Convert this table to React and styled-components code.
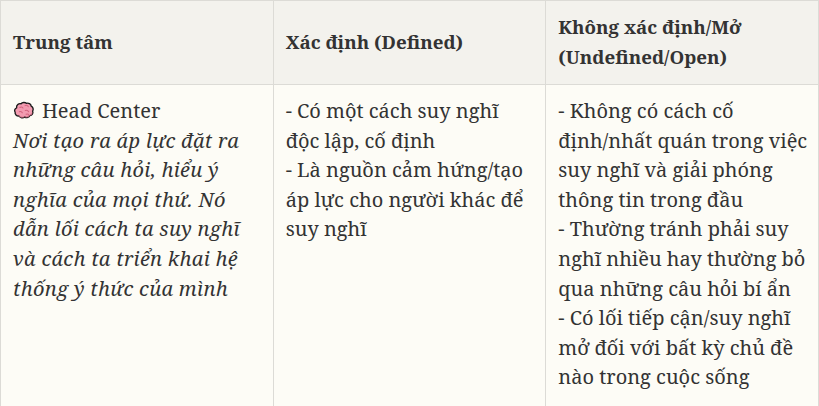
import React from "react";
import styled, { createGlobalStyle } from "styled-components";

const GlobalStyle = createGlobalStyle`
  html, body {
    margin: 0;
    padding: 0;
    background: #fdfcf6;
  }
  body {
    font-family: "Noto Serif", "DejaVu Serif", serif;
    color: #333;
  }
`;

const Table = styled.table`
  width: 819px;
  border-collapse: collapse;
  table-layout: fixed;
  font-size: 20px;
  line-height: 29.6px;
  color: #333;
`;

const HeadCell = styled.th`
  background: #f3f2ed;
  border: 1px solid #dcdbd6;
  padding: 11px 12px 12px;
  text-align: left;
  font-size: 18.75px;
  line-height: 30px;
  font-weight: 700;
  vertical-align: middle;
`;

const Cell = styled.td`
  background: #fdfcf6;
  border: 1px solid #dcdbd6;
  padding: 11px ${(props) => (props.tight ? "6px" : "12px")} 15px 12px;
  vertical-align: top;
`;

const Line = styled.div`
  font-style: ${(props) => (props.italic ? "italic" : "normal")};
  letter-spacing: ${(props) => (props.italic ? "0.3px" : "normal")};
`;

const Emoji = styled.svg`
  width: 22px;
  height: 19px;
  vertical-align: -2px;
  margin-right: 7px;
`;

function Brain() {
  return (
    <Emoji viewBox="0 0 20 18">
      <path
        d="M3 6.5C2.5 3.8 5 2 7.2 2.6C8.3 1.2 11 1 12.3 2.2C14.3 1.6 16.6 2.8 16.8 4.8C18.6 5.6 19.2 8 18.2 9.6C19 11.6 17.6 13.8 15.6 13.8C14.8 15.6 12.4 16.2 10.8 15.2C9 16.4 6.2 16 5.2 14.2C3 14.4 1.2 12.6 1.6 10.6C0.6 9.2 1.2 7.2 3 6.5Z"
        fill="#f29bb0"
        stroke="#1b1b1b"
        strokeWidth="1.3"
        strokeLinejoin="round"
      />
      <path
        d="M6 6.2C7 5.4 8.4 5.6 9 6.6M11 4.4C12 3.8 13.6 4.2 14 5.4M5.6 10.2C6.8 9.6 8 10.2 8.4 11.2M11.2 9C12.4 8.4 14 9 14.4 10.2M12 12.6C13 12.2 14.2 12.6 14.6 13.4"
        fill="none"
        stroke="#d2637e"
        strokeWidth="1"
        strokeLinecap="round"
      />
      <path
        d="M4 12.5C6 14.8 10 15.2 12 14.6C14.5 14 16.5 12.8 17.8 10.6C18.4 12.4 17.2 13.8 15.6 13.8C14.8 15.6 12.4 16.2 10.8 15.2C9 16.4 6.2 16 5.2 14.2Z"
        fill="#e0738e"
        opacity="0.7"
      />
    </Emoji>
  );
}

export default function App() {
  return (
    <>
      <GlobalStyle />
      <Table>
        <thead>
          <tr>
            <HeadCell>Trung tâm</HeadCell>
            <HeadCell>Xác định (Defined)</HeadCell>
            <HeadCell>Không xác định/Mở (Undefined/Open)</HeadCell>
          </tr>
        </thead>
        <tbody>
          <tr>
            <Cell>
              <Line>
                <Brain />
                Head Center
              </Line>
              <Line italic>
                Nơi tạo ra áp lực đặt ra những câu hỏi, hiểu ý nghĩa của mọi
                thứ. Nó dẫn lối cách ta suy nghĩ và cách ta triển khai hệ thống
                ý thức của mình
              </Line>
            </Cell>
            <Cell>
              <Line>- Có một cách suy nghĩ độc lập, cố định</Line>
              <Line>
                - Là nguồn cảm hứng/tạo áp lực cho người khác để suy nghĩ
              </Line>
            </Cell>
            <Cell tight>
              <Line>
                - Không có cách cố định/nhất quán trong việc suy nghĩ và giải
                phóng thông tin trong đầu
              </Line>
              <Line>
                - Thường tránh phải suy nghĩ nhiều hay thường bỏ qua những câu
                hỏi bí ẩn
              </Line>
              <Line>
                - Có lối tiếp cận/suy nghĩ mở đối với bất kỳ chủ đề nào trong
                cuộc sống
              </Line>
            </Cell>
          </tr>
        </tbody>
      </Table>
    </>
  );
}
